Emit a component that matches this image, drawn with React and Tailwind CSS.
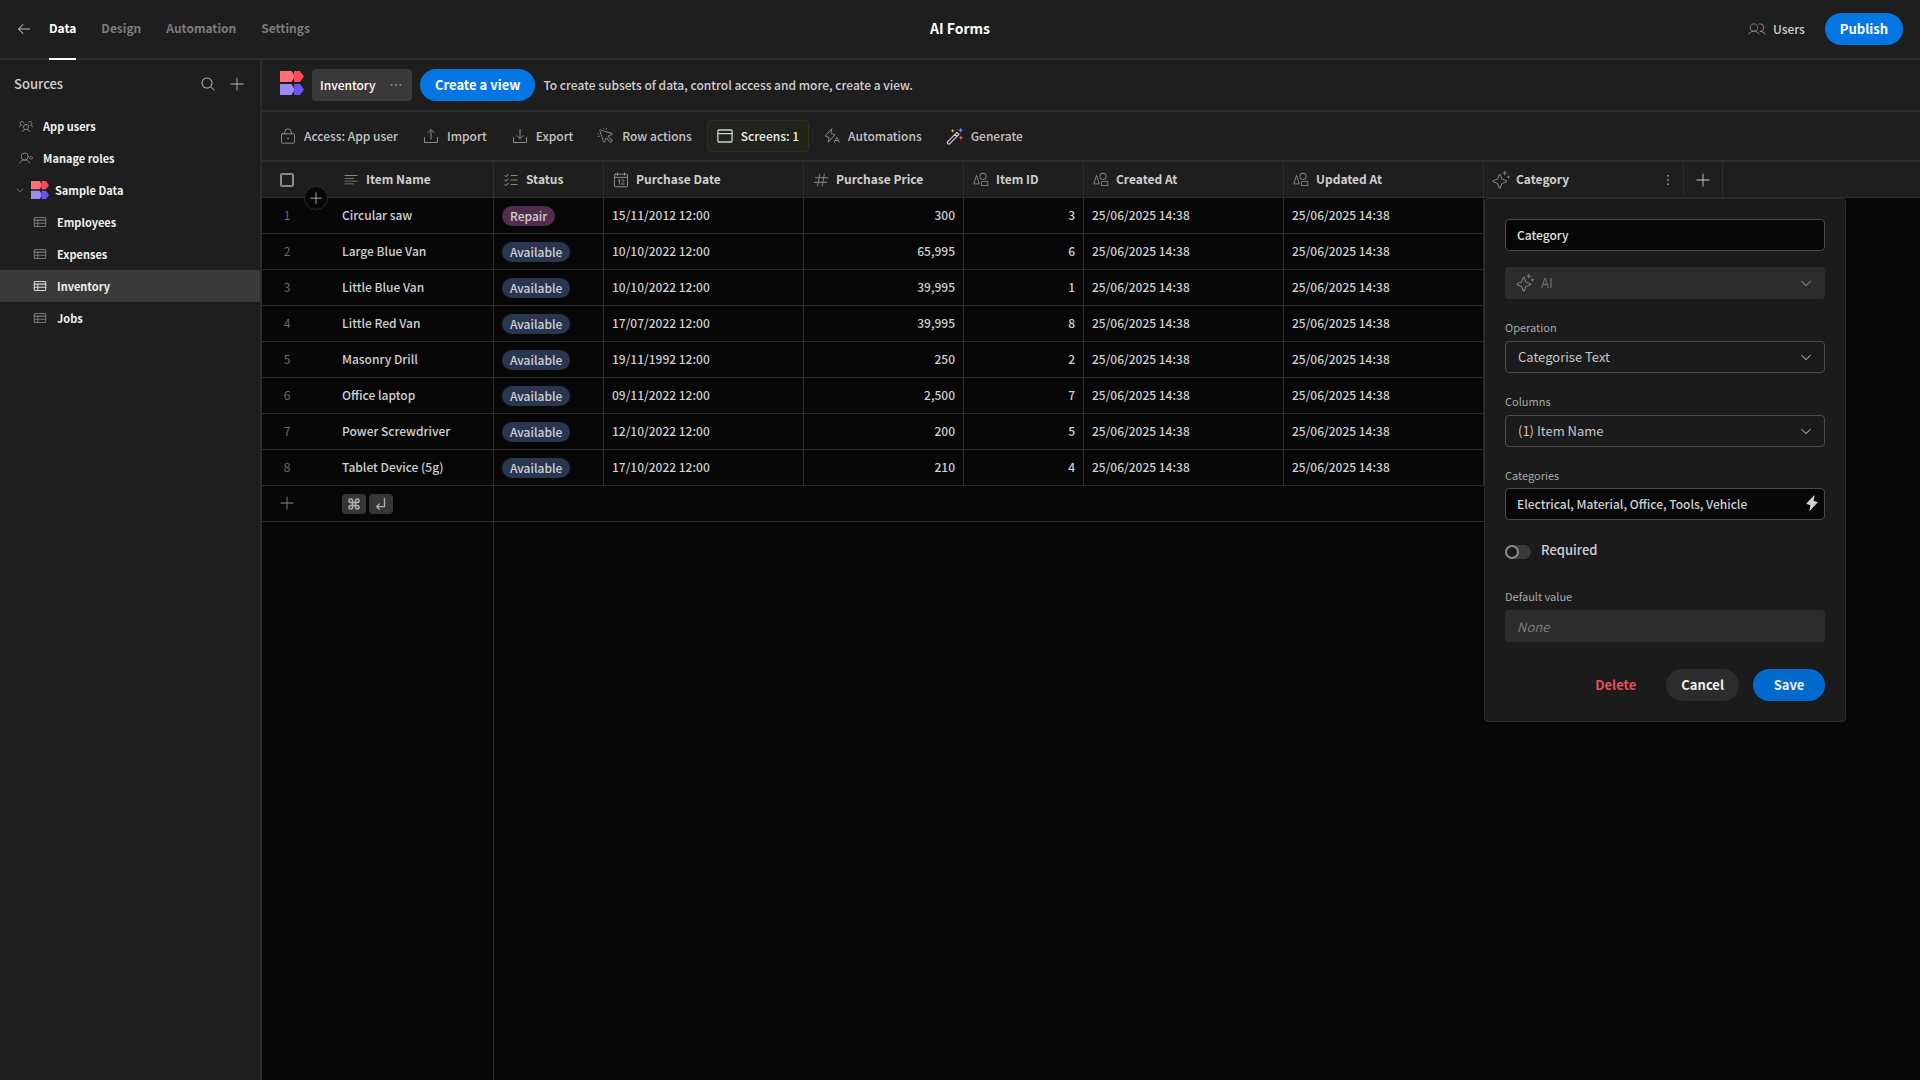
import { useState } from 'react';
import {
  PiArrowElbowDownLeftBold,
  PiArrowLeft,
  PiCaretDown,
  PiCommandBold,
  PiCursorClickLight,
  PiDotsThreeBold,
  PiDotsThreeVerticalBold,
  PiHashLight,
  PiLightningALight,
  PiLightningFill,
  PiListChecksLight,
  PiMagnifyingGlass,
  PiPlusLight,
  PiShapesLight,
  PiSparkleLight,
  PiTextAlignLeftLight,
  PiUsersLight,
  PiUsersThreeLight,
} from 'react-icons/pi';

const svgProps = {
  viewBox: '-1 -1 18 18',
  fill: 'none',
  stroke: 'currentColor',
  strokeLinecap: 'round',
  strokeLinejoin: 'round',
  'aria-hidden': true,
};

function LockIcon({ className }) {
  return (
    <svg {...svgProps} className={className}>
      <rect x="1.5" y="5.8" width="13" height="9.4" rx="1" />
      <path d="M4.8 5.8V4a3.2 3.2 0 0 1 6.4 0v1.8" />
      <circle cx="8" cy="10.5" r="0.5" fill="currentColor" />
    </svg>
  );
}

function UploadIcon({ className }) {
  return (
    <svg {...svgProps} className={className}>
      <path d="M1.5 9.5V14.5h13V9.5M8 11V1.8M4.8 4.8 8 1.6l3.2 3.2" />
    </svg>
  );
}

function DownloadIcon({ className }) {
  return (
    <svg {...svgProps} className={className}>
      <path d="M1.5 9.5V14.5h13V9.5M8 1.5v9M4.8 7.5 8 10.7l3.2-3.2" />
    </svg>
  );
}

function ScreenIcon({ className }) {
  return (
    <svg {...svgProps} className={className}>
      <rect x="0.9" y="2" width="14.2" height="12" rx="1" strokeWidth="1.3" />
      <path d="M1 5.7h14" strokeWidth="1.3" />
    </svg>
  );
}

function CalendarIcon({ className }) {
  return (
    <svg {...svgProps} className={className}>
      <rect x="1.5" y="2.2" width="13" height="12.6" rx="0.8" />
      <path d="M1.5 5.4h13M4.5 0.9v2.5M11.5 0.9v2.5" />
      <path d="M5.3 8.4l1.3-.8v4.6M8.6 8.5c.3-1.3 2.4-1.1 2.3.3-.1 1-1.6 2-2.3 3.3h2.5" />
    </svg>
  );
}

function WandIcon({ className }) {
  return (
    <svg {...svgProps} className={className}>
      <path d="M.8 13.6 10 4.4l2 2L2.8 15.6a1.4 1.4 0 0 1-2-2ZM8 6.4l2 2" strokeWidth="1.2" />
      <path d="M5.6.8l.6 1.400 1.400.6-1.400.6-.6 1.400-.6-1.400-1.400-.6 1.400-.6z" fill="#e8b84a" stroke="none" />
      <path d="M13.6-.4l.8 1.900 1.900.8-1.900.8-.8 1.900-.8-1.900-1.900-.8 1.900-.8z" fill="#7b7cf0" stroke="none" />
      <path d="M13.8 7.2l.8 1.700 1.700.8-1.700.8-.8 1.700-.8-1.700-1.700-.8 1.700-.8z" fill="#f0525c" stroke="none" />
    </svg>
  );
}

function TableIcon({ className }) {
  return (
    <svg {...svgProps} className={className}>
      <rect x="1.6" y="2.9" width="12.8" height="10.2" rx="1" strokeWidth="1.2" />
      <path d="M1.6 5.9h12.8M1.6 9.5h12.8M5.5 5.9v7.2" strokeWidth="1.2" />
    </svg>
  );
}

function RolesIcon({ className }) {
  return (
    <svg {...svgProps} className={className}>
      <circle cx="6.5" cy="6.3" r="4" />
      <path d="M0.7 13.6c1-2 3-3.3 5.8-3.3s4.8 1.3 5.8 3.3" />
      <path d="M13.8 6.2l1.7 1.7-1.7 1.7-1.7-1.7z" />
    </svg>
  );
}

function Logo({ className }) {
  return (
    <svg viewBox="0 0 24 24" className={className} aria-hidden="true">
      <path d="M0 0h11.5L14 4v3L11.5 11H0z" fill="#ff7077" />
      <path d="M14 0h6L24 5.5 20 11H14z" fill="#fa4a58" />
      <path d="M0 13h11.5L14 17v3L11.5 24H0z" fill="#9b8af8" />
      <path d="M14 13h6L24 18.5 20 24H14z" fill="#6a53ee" />
    </svg>
  );
}

const navTabs = ['Data', 'Design', 'Automation', 'Settings'];

const sources = [
  { name: 'Employees' },
  { name: 'Expenses' },
  { name: 'Inventory', active: true },
  { name: 'Jobs' },
];

const columns = [
  { name: 'Item Name', icon: PiTextAlignLeftLight },
  { name: 'Status', icon: PiListChecksLight },
  { name: 'Purchase Date', icon: CalendarIcon },
  { name: 'Purchase Price', icon: PiHashLight },
  { name: 'Item ID', icon: PiShapesLight },
  { name: 'Created At', icon: PiShapesLight },
  { name: 'Updated At', icon: PiShapesLight },
];

const stamp = '25/06/2025 14:38';

const rows = [
  { item: 'Circular saw', status: 'Repair', date: '15/11/2012 12:00', price: '300', id: 3 },
  { item: 'Large Blue Van', status: 'Available', date: '10/10/2022 12:00', price: '65,995', id: 6 },
  { item: 'Little Blue Van', status: 'Available', date: '10/10/2022 12:00', price: '39,995', id: 1 },
  { item: 'Little Red Van', status: 'Available', date: '17/07/2022 12:00', price: '39,995', id: 8 },
  { item: 'Masonry Drill', status: 'Available', date: '19/11/1992 12:00', price: '250', id: 2 },
  { item: 'Office laptop', status: 'Available', date: '09/11/2022 12:00', price: '2,500', id: 7 },
  { item: 'Power Screwdriver', status: 'Available', date: '12/10/2022 12:00', price: '200', id: 5 },
  { item: 'Tablet Device (5g)', status: 'Available', date: '17/10/2022 12:00', price: '210', id: 4 },
];

function Header() {
  return (
    <header className="grid h-[60px] grid-cols-3 items-stretch border-b-2 border-[#2c2c2c]">
      <div className="flex items-center pl-4">
        <a href="#back" aria-label="Back" className="mr-[17px] text-[#b8b8b8]">
          <PiArrowLeft className="size-4" />
        </a>
        <nav className="-mb-[2px] flex gap-[25px] self-stretch">
          {navTabs.map((tab) => (
            <a
              key={tab}
              href={`#${tab.toLowerCase()}`}
              className={`flex items-center border-b-2 pb-0.5 text-xs font-bold ${tab === 'Data' ? 'border-white text-white' : 'border-transparent text-[#7c7c7c]'}`}
            >
              {tab}
            </a>
          ))}
        </nav>
      </div>
      <h1 className="self-center pb-0.5 text-center text-[14px] font-bold text-white">AI Forms</h1>
      <div className="flex items-center justify-end gap-5 pr-[17px]">
        <button type="button" className="flex items-center gap-[7px] text-xs font-medium">
          <PiUsersLight className="size-[18px] text-[#8a8a8a]" />
          Users
        </button>
        <button type="button" className="h-8 rounded-full bg-[#0476e4] px-[15px] text-[13px] font-bold text-white">
          Publish
        </button>
      </div>
    </header>
  );
}

function Sidebar() {
  return (
    <aside className="w-[262px] shrink-0 border-r-2 border-[#2c2c2c]">
      <div className="flex h-12 items-center px-[14px]">
        <h2 className="flex-1 text-[13px] font-medium">Sources</h2>
        <button type="button" aria-label="Search" className="mr-3">
          <PiMagnifyingGlass className="size-4 text-[#a8a8a8]" />
        </button>
        <button type="button" aria-label="Add source">
          <PiPlusLight className="size-[18px] text-[#c0c0c0]" />
        </button>
      </div>
      <ul className="mt-[2px] text-[11px] font-bold text-[#f0f0f0]">
        <li>
          <a href="#app-users" className="flex h-8 items-center gap-[9px] pl-[18px]">
            <PiUsersThreeLight className="size-4 text-[#8a8a8a]" />
            App users
          </a>
        </li>
        <li>
          <a href="#roles" className="flex h-8 items-center gap-[9px] pl-[18px]">
            <RolesIcon className="size-4 text-[#8a8a8a]" />
            Manage roles
          </a>
        </li>
        <li>
          <a href="#sample-data" className="flex h-8 items-center pl-[15px]">
            <PiCaretDown className="mr-[6px] size-[10px] text-[#8a8a8a]" />
            <Logo className="mr-[6px] size-[18px]" />
            Sample Data
          </a>
          <ul>
            {sources.map((source) => (
              <li key={source.name}>
                <a
                  href={`#${source.name.toLowerCase()}`}
                  className={`flex h-8 items-center gap-[9px] pl-8 ${source.active ? 'bg-[#3a3a3a]' : ''}`}
                >
                  <TableIcon className={`size-4 ${source.active ? 'text-[#d8d8d8]' : 'text-[#777777]'}`} />
                  {source.name}
                </a>
              </li>
            ))}
          </ul>
        </li>
      </ul>
    </aside>
  );
}

function ViewBar() {
  return (
    <div className="flex h-[52px] items-center border-b-2 border-[#2c2c2c] pl-[18px] text-[13px]">
      <Logo className="mr-2 -mt-1 size-6" />
      <button type="button" className="mr-2 flex h-8 w-[100px] items-center justify-between rounded bg-[#3a3a3a] px-2 text-xs font-medium text-white">
        Inventory
        <PiDotsThreeBold className="size-4 text-[#8f8f8f]" />
      </button>
      <button type="button" className="mr-2 h-8 rounded-full bg-[#0476e4] px-[15px] font-bold text-white">
        Create a view
      </button>
      <p className="text-xs font-medium">To create subsets of data, control access and more, create a view.</p>
    </div>
  );
}

function ToolButton({ icon: Icon, label, active }) {
  return (
    <button
      type="button"
      className={`flex h-8 items-center gap-2 rounded border px-[9px] ${active ? 'border-[#2c3317] bg-[#21241b] text-[#ececec]' : 'border-transparent'}`}
    >
      <Icon className={`-mx-px size-[18px] ${active || label === 'Generate' ? 'text-[#d0d0d0]' : 'text-[#8a8a8a]'}`} />
      {label}
    </button>
  );
}

function Toolbar() {
  return (
    <div className="flex h-[50px] items-center gap-[5px] border-b-2 border-[#2c2c2c] pl-2 text-xs font-medium text-[#c4c4c4]">
      <ToolButton icon={LockIcon} label="Access: App user" />
      <ToolButton icon={UploadIcon} label="Import" />
      <ToolButton icon={DownloadIcon} label="Export" />
      <ToolButton icon={PiCursorClickLight} label="Row actions" />
      <ToolButton icon={ScreenIcon} label="Screens: 1" active />
      <ToolButton icon={PiLightningALight} label="Automations" />
      <ToolButton icon={WandIcon} label="Generate" />
    </div>
  );
}

function SelectField({ id, label, value }) {
  return (
    <div>
      <label htmlFor={id} className="block h-[22px] text-[11px] leading-4 text-[#a9a9a9]">{label}</label>
      <div className="relative">
        <select id={id} className="block h-8 w-full appearance-none rounded border border-[#4a4a4a] px-3 text-[13px] text-[#c6c6c6]">
          <option>{value}</option>
        </select>
        <PiCaretDown className="absolute top-[9px] right-3 size-[14px] text-[#b0b0b0]" />
      </div>
    </div>
  );
}

function ColumnEditor() {
  const [name, setName] = useState('Category');
  const [categories, setCategories] = useState('Electrical, Material, Office, Tools, Vehicle');
  const [required, setRequired] = useState(false);

  return (
    <form
      onSubmit={(e) => e.preventDefault()}
      className="absolute top-full left-0 z-10 mt-px w-[362px] rounded border border-[#2e2e2e] bg-[#1b1b1b] p-5 text-left font-normal"
    >
      <input
        aria-label="Column name"
        value={name}
        onChange={(e) => setName(e.target.value)}
        className="block h-8 w-full rounded border border-[#4a4a4a] bg-[#070707] px-[11px] pb-0.5 text-xs font-medium text-[#e0e0e0]"
      />
      <div className="relative mt-4">
        <PiSparkleLight className="absolute top-[6px] left-[10px] size-5 text-[#8a8a8a]" />
        <select aria-label="Type" disabled className="block h-8 w-full appearance-none rounded bg-[#2c2c2c] pr-3 pl-9 text-[13px] text-[#6f6f6f] opacity-100">
          <option>AI</option>
        </select>
        <PiCaretDown className="absolute top-[9px] right-3 size-[14px] text-[#8a8a8a]" />
      </div>
      <div className="mt-5 flex flex-col gap-5">
        <SelectField id="operation" label="Operation" value="Categorise Text" />
        <SelectField id="columns" label="Columns" value="(1) Item Name" />
        <div>
          <label htmlFor="categories" className="block h-[21px] text-[11px] leading-4 text-[#a9a9a9]">Categories</label>
          <div className="relative">
            <input
              id="categories"
              value={categories}
              onChange={(e) => setCategories(e.target.value)}
              className="block h-8 w-full rounded border border-[#4a4a4a] bg-[#070707] pr-8 pb-0.5 pl-[11px] text-xs font-medium text-[#d0d0d0]"
            />
            <PiLightningFill className="absolute top-[7px] right-[5px] size-4 text-[#d0d0d0]" />
          </div>
        </div>
      </div>
      <label className="mt-5 flex h-5 items-center gap-[10px] text-[13px] font-medium text-[#cfcfcf]">
        <input
          type="checkbox"
          checked={required}
          onChange={(e) => setRequired(e.target.checked)}
          className="mt-1 h-[14px] w-[26px] appearance-none rounded-full bg-[#3a3a3a] before:block before:size-[14px] before:rounded-full before:border-2 before:border-[#8a8a8a] before:bg-[#1b1b1b] checked:before:ml-3"
        />
        Required
      </label>
      <label htmlFor="default" className="mt-7 block h-[22px] text-[11px] leading-4 text-[#a9a9a9]">Default value</label>
      <input
        id="default"
        disabled
        placeholder="None"
        className="block h-8 w-full rounded bg-[#2c2c2c] px-3 text-[13px] italic placeholder:text-[#7d7d7d]"
      />
      <div className="mt-[27px] flex items-center justify-end text-[13px] font-bold text-[#f0f0f0]">
        <button type="button" className="mr-[14px] h-8 px-4 text-[#e34f5a]">Delete</button>
        <button type="button" className="mr-[14px] h-8 rounded-full bg-[#2c2c2c] px-[15px]">Cancel</button>
        <button type="submit" className="h-8 w-[72px] rounded-full bg-[#026acd]">Save</button>
      </div>
    </form>
  );
}

function InventoryTable() {
  return (
    <table className="w-full table-fixed border-separate border-spacing-0 text-xs font-medium text-[#d0d0d0] [&_td]:border-b [&_td]:border-[#2c2c2c] [&_th]:border-b [&_th]:border-[#2c2c2c]">
      <colgroup>
        <col className="w-[72px]" />
        <col className="w-[160px]" />
        <col className="w-[110px]" />
        <col className="w-[200px]" />
        <col className="w-[160px]" />
        <col className="w-[120px]" />
        <col className="w-[200px]" />
        <col className="w-[200px]" />
        <col className="w-[200px]" />
        <col className="w-[39px]" />
        <col />
      </colgroup>
      <thead>
        <tr className="h-9 bg-[#1e1e1e] text-left">
          <th className="relative p-0">
            <input type="checkbox" aria-label="Select all rows" className="ml-[18px] block size-[14px] appearance-none rounded-[2px] border-2 border-[#8a8a8a]" />
            <button type="button" aria-label="Insert row" className="absolute right-[6px] -bottom-[13px] z-10 grid size-6 place-items-center rounded-full border border-[#2c2c2c] bg-[#070707]">
              <PiPlusLight className="size-4 text-[#d0d0d0]" />
            </button>
          </th>
          {columns.map(({ name, icon: Icon }) => (
            <th key={name} className="border-r p-0">
              <div className="flex items-center gap-[6px] pl-2 font-bold">
                <Icon className="size-[18px] shrink-0 text-[#8a8a8a]" />
                <span className="pb-0.5">{name}</span>
              </div>
            </th>
          ))}
          <th className="relative border-r p-0">
            <div className="flex items-center gap-[5px] px-[7px] font-bold">
              <PiSparkleLight className="size-5 shrink-0 text-[#8a8a8a]" />
              <span className="flex-1 pb-0.5">Category</span>
              <button type="button" aria-label="Column options">
                <PiDotsThreeVerticalBold className="size-4 text-[#8a8a8a]" />
              </button>
            </div>
            <ColumnEditor />
          </th>
          <th className="border-r p-0">
            <button type="button" aria-label="Add column" className="mx-auto block">
              <PiPlusLight className="size-[18px]" />
            </button>
          </th>
          <th />
        </tr>
      </thead>
      <tbody>
        {rows.map((row, i) => (
          <tr key={row.item} className="h-9 [&>td]:p-0">
            <td className="text-[#6a6a6a]">
              <div className="w-[50px] pb-0.5 text-center font-normal">{i + 1}</div>
            </td>
            <td className="border-r"><div className="pb-0.5 pl-2">{row.item}</div></td>
            <td className="border-r">
              <div className="flex pl-2">
                <span className={`flex h-5 items-center rounded-full px-2 ${row.status === 'Repair' ? 'bg-[#522d4c]' : 'bg-[#2a3550]'}`}>
                  {row.status}
                </span>
              </div>
            </td>
            <td className="border-r"><div className="pb-0.5 pl-2">{row.date}</div></td>
            <td className="border-r"><div className="pr-2 pb-0.5 text-right">{row.price}</div></td>
            <td className="border-r"><div className="pr-2 pb-0.5 text-right">{row.id}</div></td>
            <td className="border-r"><div className="pb-0.5 pl-2">{stamp}</div></td>
            <td className="border-r"><div className="pb-0.5 pl-2">{stamp}</div></td>
            <td className="border-r" />
          </tr>
        ))}
        <tr className="h-9 [&>td]:p-0">
          <td>
            <button type="button" aria-label="Add row" className="ml-4 block pb-0.5">
              <PiPlusLight className="size-[18px] text-[#8a8a8a]" />
            </button>
          </td>
          <td className="border-r">
            <div className="flex gap-[3px] pl-2 text-[#b0b0b0]">
              <kbd className="grid h-5 w-6 place-items-center rounded bg-[#363636]"><PiCommandBold className="size-4" /></kbd>
              <kbd className="grid h-5 w-6 place-items-center rounded bg-[#363636]"><PiArrowElbowDownLeftBold className="size-[14px]" /></kbd>
            </div>
          </td>
          <td colSpan={7} />
        </tr>
      </tbody>
    </table>
  );
}

export default function App() {
  return (
    <div className="flex min-h-screen flex-col bg-[#1e1e1e] font-['Noto_Sans_CJK_SC','Source_Sans_Pro',sans-serif] text-[#d0d0d0]">
      <Header />
      <div className="flex flex-1">
        <Sidebar />
        <main className="flex min-w-0 flex-1 flex-col">
          <ViewBar />
          <Toolbar />
          <div className="flex flex-1 flex-col bg-[#070707]">
            <InventoryTable />
            <div className="w-[232px] flex-1 border-r border-[#2c2c2c]" />
          </div>
        </main>
      </div>
    </div>
  );
}
